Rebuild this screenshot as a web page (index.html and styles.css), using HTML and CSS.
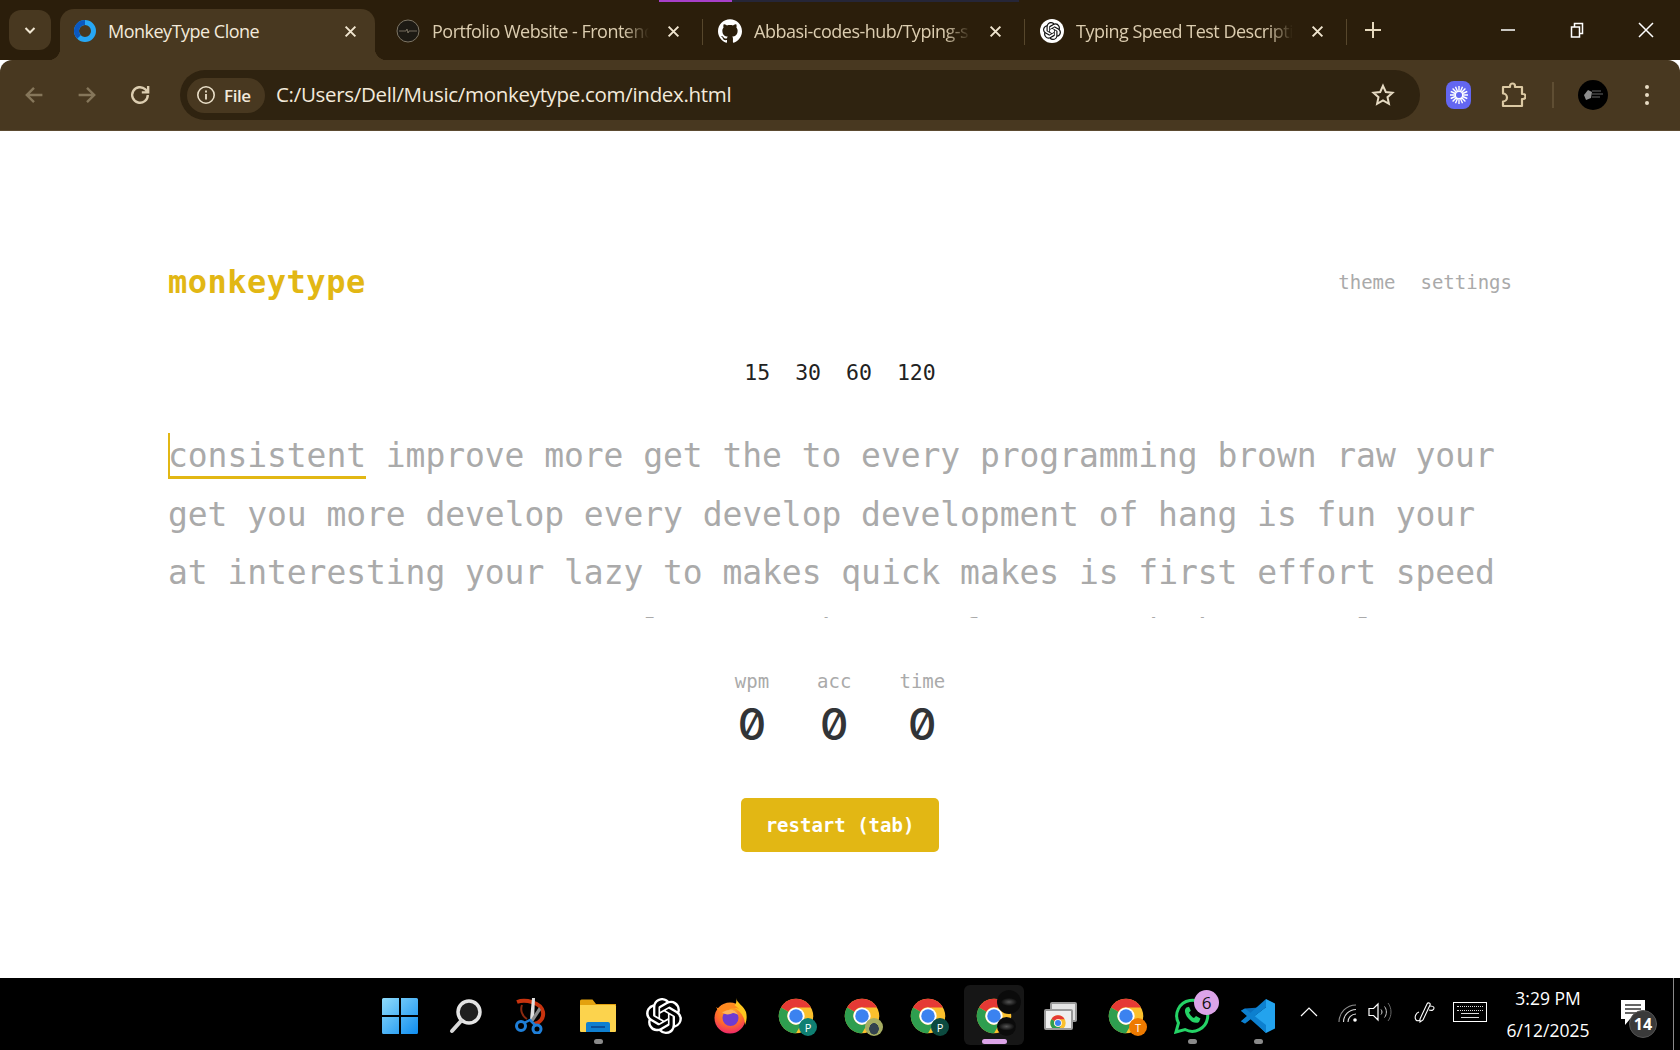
FILE: index.html
```html
<!DOCTYPE html>
<html lang="en">
<head>
  <meta charset="UTF-8">
  <meta name="viewport" content="width=device-width, initial-scale=1.0">
  <title>MonkeyType Clone</title>
  <link rel="stylesheet" href="styles.css">
</head>
<body>
  <svg class="defs" width="0" height="0">
    <defs>
      <radialGradient id="fox-body" cx="50%" cy="25%" r="85%">
        <stop offset="0" stop-color="#ffb01f"/>
        <stop offset=".55" stop-color="#ff6a2b"/>
        <stop offset="1" stop-color="#e8117f"/>
      </radialGradient>
      <linearGradient id="win-pane" x1="0" y1="0" x2="1" y2="1">
        <stop offset="0" stop-color="#8fdcfb"/>
        <stop offset="1" stop-color="#0f8df0"/>
      </linearGradient>
    </defs>
    <symbol id="chrome" viewBox="0 0 48 48">
      <circle cx="24" cy="24" r="23" fill="#fbc02d"/>
      <path d="M43.900 12.500A23 23 0 0 0 4.100 12.500L14 18.250A11.500 11.500 0 0 1 24 12.500z" fill="#e53935"/>
      <path d="M4.100 12.500A23 23 0 0 0 24 47L34 29.750A11.500 11.500 0 0 1 14 18.250z" fill="#2e9e4f"/>
      <circle cx="24" cy="24" r="11.500" fill="#fff"/>
      <circle cx="24" cy="24" r="9" fill="#3b82f0"/>
    </symbol>
    <symbol id="openai" viewBox="0 0 24 24">
      <path fill="currentColor" d="M22.2819 9.8211a5.9847 5.9847 0 0 0-.5157-4.9108 6.0462 6.0462 0 0 0-6.5098-2.9A6.0651 6.0651 0 0 0 4.9807 4.1818a5.9847 5.9847 0 0 0-3.9977 2.9 6.0462 6.0462 0 0 0 .7427 7.0966 5.98 5.98 0 0 0 .511 4.9107 6.051 6.051 0 0 0 6.5146 2.9001A5.9847 5.9847 0 0 0 13.2599 24a6.0557 6.0557 0 0 0 5.7718-4.2058 5.9894 5.9894 0 0 0 3.9977-2.9001 6.0557 6.0557 0 0 0-.7475-7.0729zm-9.022 12.6081a4.4755 4.4755 0 0 1-2.8764-1.0408l.1419-.0804 4.7783-2.7582a.7948.7948 0 0 0 .3927-.6813v-6.7369l2.02 1.1686a.071.071 0 0 1 .038.052v5.5826a4.504 4.504 0 0 1-4.4945 4.4944zm-9.6607-4.1254a4.4708 4.4708 0 0 1-.5346-3.0137l.142.0852 4.783 2.7582a.7712.7712 0 0 0 .7806 0l5.8428-3.3685v2.3324a.0804.0804 0 0 1-.0332.0615L9.74 19.9502a4.4992 4.4992 0 0 1-6.1408-1.6464zM2.3408 7.8956a4.485 4.485 0 0 1 2.3655-1.9728V11.6a.7664.7664 0 0 0 .3879.6765l5.8144 3.3543-2.0201 1.1685a.0757.0757 0 0 1-.071 0l-4.8303-2.7865A4.504 4.504 0 0 1 2.3408 7.872zm16.5963 3.8558L13.1038 8.364 15.1192 7.2a.0757.0757 0 0 1 .071 0l4.8303 2.7913a4.4944 4.4944 0 0 1-.6765 8.1042v-5.6772a.79.79 0 0 0-.407-.667zm2.0107-3.0231l-.142-.0852-4.7735-2.7818a.7759.7759 0 0 0-.7854 0L9.409 9.2297V6.8974a.0662.0662 0 0 1 .0284-.0615l4.8303-2.7866a4.4992 4.4992 0 0 1 6.6802 4.66zM8.3065 12.863l-2.02-1.1638a.0804.0804 0 0 1-.038-.0567V6.0742a4.4992 4.4992 0 0 1 7.3757-3.4537l-.142.0805L8.704 5.459a.7948.7948 0 0 0-.3927.6813zm1.0976-2.3654l2.602-1.4998 2.6069 1.4998v2.9994l-2.5974 1.4997-2.6067-1.4997Z"/>
    </symbol>
    <symbol id="close" viewBox="0 0 12 12">
      <path d="M1.500 1.500l9 9M10.500 1.500l-9 9" fill="none" stroke="currentColor" stroke-width="1.800"/>
    </symbol>
  </svg>

  <div class="tabstrip">
    <div class="sync-bar"><span class="sync-purple"></span></div>
    <button class="tab-search">
      <svg width="12" height="12" viewBox="0 0 12 12"><path d="M1.500 4l4.500 4.500L10.500 4" fill="none" stroke="#f1e7d3" stroke-width="2"/></svg>
    </button>
    <div class="tab active">
      <svg class="favicon" viewBox="0 0 24 24">
        <circle cx="12" cy="12" r="8.500" fill="none" stroke="#27a7f5" stroke-width="5"/>
        <path d="M12 3.500a8.500 8.500 0 0 0-6 14.500" fill="none" stroke="#0b58c0" stroke-width="5"/>
      </svg>
      <span class="tab-title">MonkeyType Clone</span>
      <svg class="tab-close"><use href="#close"/></svg>
    </div>
    <div class="tab">
      <svg class="favicon" viewBox="0 0 24 24">
        <circle cx="12" cy="12" r="11" fill="#1d1a14" stroke="#7d7565" stroke-width="1"/>
        <path d="M3 12h7l1-2 1 4 1-2h8" fill="none" stroke="#8a8270" stroke-width=".8"/>
      </svg>
      <span class="tab-title">Portfolio Website - Frontend</span>
      <svg class="tab-close"><use href="#close"/></svg>
    </div>
    <div class="tab">
      <svg class="favicon" viewBox="0 0 24 24"><path fill="#fff" d="M12 .297c-6.630 0-12 5.373-12 12 0 5.303 3.438 9.800 8.205 11.385.6.113.82-.258.82-.577 0-.285-.01-1.040-.015-2.040-3.338.724-4.042-1.610-4.042-1.610C4.422 18.070 3.633 17.700 3.633 17.700c-1.087-.744.084-.729.084-.729 1.205.084 1.838 1.236 1.838 1.236 1.070 1.835 2.809 1.305 3.495.998.108-.776.417-1.305.76-1.605-2.665-.3-5.466-1.332-5.466-5.930 0-1.310.465-2.380 1.235-3.220-.135-.303-.54-1.523.105-3.176 0 0 1.005-.322 3.300 1.230.96-.267 1.980-.399 3-.405 1.020.006 2.040.138 3 .405 2.280-1.552 3.285-1.230 3.285-1.230.645 1.653.24 2.873.12 3.176.765.84 1.230 1.910 1.230 3.220 0 4.610-2.805 5.625-5.475 5.920.42.36.81 1.096.81 2.220 0 1.606-.015 2.896-.015 3.286 0 .315.21.69.825.57C20.565 22.092 24 17.592 24 12.297c0-6.627-5.373-12-12-12"/></svg>
      <span class="tab-title">Abbasi-codes-hub/Typing-s</span>
      <svg class="tab-close"><use href="#close"/></svg>
    </div>
    <div class="tab">
      <div class="favicon gpt-favicon"><svg width="18" height="18"><use href="#openai"/></svg></div>
      <span class="tab-title">Typing Speed Test Descripti</span>
      <svg class="tab-close"><use href="#close"/></svg>
    </div>
    <svg class="new-tab" width="16" height="16" viewBox="0 0 16 16"><path d="M8 0v16M0 8h16" stroke="#e6d9bd" stroke-width="2"/></svg>
    <div class="window-controls">
      <svg width="16" height="16" viewBox="0 0 16 16"><path d="M1 8h14" stroke="#fff" stroke-width="1.500"/></svg>
      <svg width="16" height="16" viewBox="0 0 16 16"><path d="M2.500 5h8v10h-8zM5.500 5V1.500h8v10h-3" fill="none" stroke="#fff" stroke-width="1.500"/></svg>
      <svg width="16" height="16" viewBox="0 0 16 16"><path d="M1 1l14 14M15 1L1 15" stroke="#fff" stroke-width="1.500"/></svg>
    </div>
  </div>

  <div class="toolbar">
    <svg class="nav-icon" viewBox="0 0 20 20"><path d="M17 10H4M10 4l-6 6 6 6" fill="none" stroke="#85765a" stroke-width="2"/></svg>
    <svg class="nav-icon" viewBox="0 0 20 20"><path d="M3 10h13M10 4l6 6-6 6" fill="none" stroke="#85765a" stroke-width="2"/></svg>
    <svg class="nav-icon" viewBox="0 0 20 20"><path d="M16.500 10a6.500 6.500 0 1 1-2-4.700L16.500 7.500M16.800 2.500v5.300h-5.300" fill="none" stroke="#dccdb0" stroke-width="2"/></svg>
    <div class="omnibox">
      <div class="site-chip">
        <svg width="20" height="20" viewBox="0 0 20 20"><circle cx="10" cy="10" r="8.200" fill="none" stroke="#eadfc8" stroke-width="1.600"/><path d="M10 9v5.500M10 5.500v2" stroke="#eadfc8" stroke-width="1.800"/></svg>
        <span>File</span>
      </div>
      <span class="url">C:/Users/Dell/Music/monkeytype.com/index.html</span>
      <svg width="24" height="24" viewBox="0 0 24 24"><path d="M12 2.800l2.800 6.200 6.700.7-5 4.500 1.400 6.600-5.900-3.400-5.900 3.400 1.400-6.600-5-4.500 6.700-.7z" fill="none" stroke="#e6dac2" stroke-width="2"/></svg>
    </div>
    <div class="ext-icon">
      <svg width="20" height="20" viewBox="0 0 20 20">
        <path d="M10 1v18M1 10h18M3.600 3.600l12.800 12.800M16.400 3.600L3.600 16.400M6.500 1.700l7 16.600M13.500 1.700l-7 16.600M1.700 6.500l16.600 7M18.300 6.500l-16.600 7" stroke="#fff" stroke-width="1.400"/>
        <circle cx="10" cy="10" r="3" fill="#6366f1"/>
      </svg>
    </div>
    <svg class="puzzle" width="26" height="26" viewBox="0 0 26 26"><path d="M3 5h7V4a2.500 2.500 0 0 1 5 0v1h7v7h1a2.500 2.500 0 0 1 0 5h-1v7H3v-4.500a4 4 0 0 0 0-8z" fill="none" stroke="#dcc9a3" stroke-width="2.200" stroke-linejoin="round"/></svg>
    <span class="toolbar-sep"></span>
    <div class="avatar"><svg width="24" height="16" viewBox="0 0 24 16"><path d="M3 8l4-5 4 2-1 6-5 2z" fill="#8d8d8d"/><path d="M11 4h9M11 7h11M11 10h8" stroke="#666" stroke-width="1"/></svg></div>
    <svg class="menu-dots" width="6" height="22" viewBox="0 0 6 22"><circle cx="3" cy="3" r="2" fill="#e8dcc4"/><circle cx="3" cy="11" r="2" fill="#e8dcc4"/><circle cx="3" cy="19" r="2" fill="#e8dcc4"/></svg>
  </div>

  <main class="page">
    <div class="container">
      <header class="top">
        <div class="logo">monkeytype</div>
        <nav class="links"><a>theme</a><a>settings</a></nav>
      </header>
      <div class="modes"><button>15</button><button>30</button><button>60</button><button>120</button></div>
      <div class="words">
        <span class="word current">consistent</span> <span class="word">improve</span> <span class="word">more</span> <span class="word">get</span> <span class="word">the</span> <span class="word">to</span> <span class="word">every</span> <span class="word">programming</span> <span class="word">brown</span> <span class="word">raw</span> <span class="word">your</span>
        <span class="word">get</span> <span class="word">you</span> <span class="word">more</span> <span class="word">develop</span> <span class="word">every</span> <span class="word">develop</span> <span class="word">development</span> <span class="word">of</span> <span class="word">hang</span> <span class="word">is</span> <span class="word">fun</span> <span class="word">your</span>
        <span class="word">at</span> <span class="word">interesting</span> <span class="word">your</span> <span class="word">lazy</span> <span class="word">to</span> <span class="word">makes</span> <span class="word">quick</span> <span class="word">makes</span> <span class="word">is</span> <span class="word">first</span> <span class="word">effort</span> <span class="word">speed</span>
        <span class="word">your</span> <span class="word">more</span> <span class="word">your</span> <span class="word">more</span> <span class="word">raw</span> <span class="word">lazy</span> <span class="word">you</span> <span class="word">brown</span> <span class="word">of</span> <span class="word">more</span> <span class="word">and</span> <span class="word">the</span> <span class="word">your</span> <span class="word">lazy</span>
      </div>
      <div class="stats">
        <div class="stat"><div class="stat-label">wpm</div><div class="stat-value">0</div></div>
        <div class="stat"><div class="stat-label">acc</div><div class="stat-value">0</div></div>
        <div class="stat"><div class="stat-label">time</div><div class="stat-value">0</div></div>
      </div>
      <div class="restart-row"><button class="restart">restart (tab)</button></div>
    </div>
  </main>

  <footer class="taskbar">
    <div class="slot">
      <svg class="task-icon" viewBox="0 0 36 36"><path d="M0 1.500A1.500 1.500 0 0 1 1.500 0H17v17H0zM19 0h15.500A1.500 1.500 0 0 1 36 1.500V17H19zM0 19h17v17H1.500A1.500 1.500 0 0 1 0 34.500zM19 19h17v15.500a1.500 1.500 0 0 1-1.500 1.500H19z" fill="url(#win-pane)"/></svg>
    </div>
    <div class="slot">
      <svg class="task-icon" viewBox="0 0 36 36"><circle cx="21" cy="14" r="11" fill="#1f1f1f" stroke="#e4e4e4" stroke-width="3.500"/><path d="M13 23L4 33" stroke="#d8d8d8" stroke-width="4" stroke-linecap="round"/></svg>
    </div>
    <div class="slot">
      <svg class="task-icon" viewBox="0 0 36 36">
        <path d="M3 4c8-3 24 0 26 10 1 6-3 11-9 12" fill="none" stroke="#c8330e" stroke-width="4"/>
        <path d="M8 7c-2 5 0 11 5 14" fill="none" stroke="#8c2a10" stroke-width="2"/>
        <path d="M18 0h3l-1 22h-4z" fill="#e0e0e0"/>
        <path d="M25 9l-9 14 3 1 8-12z" fill="#8c8c8c"/>
        <circle cx="7" cy="28" r="4.500" fill="none" stroke="#1f7fd8" stroke-width="3"/>
        <circle cx="23" cy="31" r="4" fill="none" stroke="#1f7fd8" stroke-width="3"/>
        <path d="M10 25l6-3 5 5" fill="none" stroke="#1f7fd8" stroke-width="2.500"/>
      </svg>
    </div>
    <div class="slot">
      <svg class="task-icon folder" viewBox="0 0 36 36">
        <path d="M0 3a1.500 1.500 0 0 1 1.500-1.500h11L16 6h20v4H0z" fill="#e3a10f"/>
        <path d="M0 7h34.500a1.500 1.500 0 0 1 1.500 1.500V33a1 1 0 0 1-1 1H1a1 1 0 0 1-1-1z" fill="#fcd34d"/>
        <path d="M6 34v-8a2 2 0 0 1 2-2h20a2 2 0 0 1 2 2v8z" fill="#0f7fd0"/>
        <path d="M11 29h14" stroke="#0a4f9a" stroke-width="2"/>
      </svg>
      <span class="run-dot"></span>
    </div>
    <div class="slot"><svg class="task-icon gpt-task"><use href="#openai"/></svg></div>
    <div class="slot">
      <svg class="task-icon" viewBox="0 0 36 36">
        <circle cx="18" cy="20" r="15.500" fill="url(#fox-body)"/>
        <path d="M24 0c1 5 8 8 10 14 1 4 1 8-1 13 0-8-5-15-12-18 3-2 4-5 3-9z" fill="#ffc61e"/>
        <circle cx="18.500" cy="20" r="8" fill="#6f3bd0"/>
        <path d="M4 9c3 6 8 7 12 7-2-3 2-6 7-6 3 0 5 2 6 4-4-7-10-9-15-8-4 1-6 2-7 4-1 0-2 0-3-1z" fill="#ff8a1f"/>
        <path d="M10 14c3 3 7 3 11 1 2 0 4 1 5 2-1-4-6-6-9-5-3 0-5 2-7 2z" fill="#ffb45a"/>
      </svg>
    </div>
    <div class="slot"><div class="chrome-wrap"><svg class="task-icon"><use href="#chrome"/></svg><span class="profile-badge teal">P</span></div></div>
    <div class="slot"><div class="chrome-wrap"><svg class="task-icon"><use href="#chrome"/></svg><span class="profile-badge photo"></span></div></div>
    <div class="slot"><div class="chrome-wrap"><svg class="task-icon"><use href="#chrome"/></svg><span class="profile-badge dark-teal">P</span></div></div>
    <div class="slot active-slot">
      <div class="chrome-wrap"><svg class="task-icon"><use href="#chrome"/></svg><span class="blob blob-top"></span><span class="blob blob-bottom"></span></div>
      <span class="run-pill"></span>
    </div>
    <div class="slot">
      <div class="app-stack">
        <span class="stack-card back"></span>
        <span class="stack-card front"><svg width="16" height="16" class="stack-chrome"><use href="#chrome"/></svg></span>
      </div>
    </div>
    <div class="slot"><div class="chrome-wrap"><svg class="task-icon"><use href="#chrome"/></svg><span class="profile-badge orange">T</span></div></div>
    <div class="slot">
      <div class="chrome-wrap">
        <svg class="task-icon" viewBox="0 0 36 36"><path d="M2 34l2.500-9A15.500 15.500 0 1 1 11 31.500z" fill="none" stroke="#25d366" stroke-width="3"/><path d="M12.500 9.500c-2.500 2-2 6 1.500 10.500s8 6 11 4l1.500-3.500-4.500-2.500-2 2c-2.300-1-4-3-5-5.500l1.800-1.800-1.800-4z" fill="#25d366"/></svg>
        <span class="count-badge">6</span>
      </div>
      <span class="run-dot"></span>
    </div>
    <div class="slot">
      <svg class="task-icon" viewBox="0 0 36 36">
        <path d="M26 1l9 4.500v25L26 35l-15-14.500L26 9z" fill="#23a3ee"/>
        <path d="M26 9L5 25.500l-4-2.300 7-5.200-7-5.300 4-2.200z" fill="#0a6fbd"/>
        <path d="M5 25.500l-4-2.300L26 1v8z" fill="#0d80cf"/>
        <path d="M5 10.500L1 12.800 26 35v-8z" fill="#0d80cf"/>
      </svg>
      <span class="run-dot"></span>
    </div>
    <div class="tray">
      <svg class="tray-caret" width="18" height="10" viewBox="0 0 18 10"><path d="M1 9l8-8 8 8" fill="none" stroke="#fff" stroke-width="1.200"/></svg>
      <svg class="tray-wifi" width="20" height="20" viewBox="0 0 20 20"><path d="M1 20A17 17 0 0 1 18 3" fill="none" stroke="#8f8f8f" stroke-width="1.100"/><path d="M5.500 20A12.500 12.500 0 0 1 18 7.500" fill="none" stroke="#dcdcdc" stroke-width="1.100"/><path d="M10 20a8 8 0 0 1 8-8" fill="none" stroke="#dcdcdc" stroke-width="1.100"/><circle cx="17" cy="18" r="1.800" fill="#fff"/></svg>
      <svg class="tray-vol" width="24" height="22" viewBox="0 0 24 22"><path d="M1 7.500h4.500L10 3v16l-4.500-4.500H1z" fill="none" stroke="#fff" stroke-width="1.200"/><path d="M13 8.500c1.300 1.500 1.300 3.500 0 5" fill="none" stroke="#ddd" stroke-width="1"/><path d="M16.500 5.500c2.500 3 2.500 8 0 11" fill="none" stroke="#ccc" stroke-width="1"/><path d="M20 2c4 5 4 13 0 18" fill="none" stroke="#666" stroke-width="1"/></svg>
      <svg class="tray-pen" width="22" height="22" viewBox="0 0 22 22"><path d="M6 18l7-15c1-2 4-1 3 1L9 19l-3 2z" fill="none" stroke="#fff" stroke-width="1.100"/><path d="M5 11c-3 1-5 5-3 8 1 1 3 1 4 0M15 9c3 1 5 0 5-2s-2-2-4-2" fill="none" stroke="#fff" stroke-width="1.100"/></svg>
      <div class="tray-kbd"><span></span><span></span><span class="solid"></span><span class="solid"></span></div>
      <div class="clock"><div>3:29 PM</div><div>6/12/2025</div></div>
      <div class="notif">
        <svg width="24" height="26" viewBox="0 0 24 26"><path d="M0 0h24v19H9l-5 6v-6H0z" fill="#fff"/><path d="M4 5h16M4 9h16M4 13h16" stroke="#333" stroke-width="1.500"/></svg>
        <span class="notif-count">14</span>
      </div>
    </div>
    <span class="show-desktop"></span>
  </footer>
</body>
</html>
```

FILE: styles.css
```css
* {
  box-sizing: border-box;
}
body {
  margin: 0;
  height: 100vh;
  overflow: hidden;
  display: flex;
  flex-direction: column;
  background-color: #fff;
  font-family: "Open Sans", sans-serif;
}
button {
  border: none;
  font-family: inherit;
}
.defs {
  position: absolute;
}

/* browser tabs */
.tabstrip {
  position: relative;
  height: 60px;
  flex: none;
  display: flex;
  align-items: flex-end;
  background-color: #2b1e0b;
  color: #dccdb0;
}
.sync-bar {
  position: absolute;
  top: 0;
  left: 659px;
  width: 360px;
  height: 2px;
  background-color: #262638;
}
.sync-purple {
  display: block;
  width: 73px;
  height: 2px;
  background-color: #a83fc9;
}
.tab-search {
  width: 42px;
  height: 40px;
  margin: 0 9px 10px 9px;
  border-radius: 12px;
  background-color: #483820;
  display: flex;
  align-items: center;
  justify-content: center;
  padding: 0;
}
.tab {
  position: relative;
  width: 322px;
  height: 51px;
  display: flex;
  align-items: center;
  padding: 0 23px 7px 15px;
  flex: none;
  font-size: 18px;
}
.tab.active {
  width: 315px;
  margin-right: 6px;
  padding: 0 18px 7px 13px;
  background-color: #483820;
  border-radius: 14px 14px 0 0;
  color: #f3eadb;
}
.tab.active::before,
.tab.active::after {
  content: "";
  position: absolute;
  bottom: 0;
  width: 12px;
  height: 12px;
}
.tab.active::before {
  left: -12px;
  background: radial-gradient(circle at 0 0, transparent 12px, #483820 12.500px);
}
.tab.active::after {
  right: -12px;
  background: radial-gradient(circle at 100% 0, transparent 12px, #483820 12.500px);
}
.tab + .tab:not(.active)::after {
  content: "";
  position: absolute;
  right: 0;
  top: 10px;
  width: 1px;
  height: 26px;
  background-color: #57472c;
}
.favicon {
  width: 24px;
  height: 24px;
  flex: none;
  margin-right: 12px;
}
.active .favicon {
  margin-right: 11px;
}
.gpt-favicon {
  border-radius: 50%;
  background-color: #fff;
  color: #111;
  display: flex;
  align-items: center;
  justify-content: center;
}
.tab-title {
  flex: 1;
  white-space: nowrap;
  overflow: hidden;
  letter-spacing: -0.500px;
  -webkit-mask-image: linear-gradient(to right, #000 88%, transparent 100%);
  mask-image: linear-gradient(to right, #000 88%, transparent 100%);
}
.tab.active .tab-title {
  -webkit-mask-image: none;
  mask-image: none;
}
.tab-close {
  width: 13px;
  height: 13px;
  margin-left: 18px;
  flex: none;
  color: #f0e5cf;
}
.new-tab {
  margin: 0 0 22px 18px;
  flex: none;
}
.window-controls {
  margin-left: auto;
  height: 60px;
  display: flex;
  align-items: center;
  gap: 53px;
  padding: 0 26px 0 0;
}

/* browser toolbar */
.toolbar {
  height: 71px;
  flex: none;
  display: flex;
  align-items: center;
  padding: 0 23px 0 22px;
  background-color: #483820;
  border-radius: 12px 12px 0 0;
  border-bottom: 1px solid #5b4a30;
}
.nav-icon {
  width: 24px;
  height: 24px;
  margin-right: 29px;
  flex: none;
}
.omnibox {
  width: 1240px;
  height: 50px;
  margin-left: -1px;
  flex: none;
  display: flex;
  align-items: center;
  padding: 0 25px 0 7px;
  border-radius: 25px;
  background-color: #2f2310;
  color: #f3eadb;
}
.site-chip {
  width: 78px;
  height: 35px;
  display: flex;
  align-items: center;
  gap: 8px;
  padding-left: 9px;
  border-radius: 18px;
  background-color: #483820;
  font-size: 17px;
  font-weight: 600;
  letter-spacing: -0.400px;
}
.url {
  flex: 1;
  margin-left: 11px;
  padding-bottom: 2px;
  font-size: 20.500px;
  letter-spacing: -0.310px;
}
.ext-icon {
  width: 25px;
  height: 28px;
  margin-left: 26px;
  border-radius: 8px;
  background-color: #6366f1;
  display: flex;
  align-items: center;
  justify-content: center;
  flex: none;
}
.puzzle {
  margin-left: 29px;
  flex: none;
}
.toolbar-sep {
  width: 2px;
  height: 26px;
  margin-left: 26px;
  background-color: #5f4e33;
  flex: none;
}
.avatar {
  width: 30px;
  height: 30px;
  margin-left: 24px;
  border-radius: 50%;
  background-color: #000;
  display: flex;
  align-items: center;
  justify-content: center;
  flex: none;
}
.menu-dots {
  margin-left: 36px;
  flex: none;
}

/* typing page */
.page {
  flex: 1;
  min-height: 0;
  display: flex;
  justify-content: center;
  font-family: "DejaVu Sans Mono", monospace;
}
.container {
  width: 1344px;
}
.top {
  display: flex;
  justify-content: space-between;
  align-items: center;
  margin-top: 127px;
}
.logo {
  color: #e2b714;
  font-size: 32px;
  font-weight: bold;
  letter-spacing: 0.500px;
  line-height: 48px;
}
.links {
  display: flex;
  gap: 25px;
  color: #aaa;
  font-size: 19px;
}
.modes {
  display: flex;
  justify-content: center;
  gap: 25px;
  margin-top: 51px;
}
.modes button {
  padding: 0;
  background: none;
  color: #222;
  font-size: 21.500px;
  line-height: 32px;
}
.words {
  height: 191px;
  margin-top: 38px;
  overflow: hidden;
  color: #aaa;
  font-size: 33px;
  line-height: 58.500px;
  letter-spacing: -0.070px;
}
.word.current {
  padding: 3px 0 4px;
  box-shadow: inset 2px 0 0 #e2b714, inset 0 -3px 0 #e2b714;
}
.stats {
  display: flex;
  justify-content: center;
  gap: 48px;
  margin-top: 50px;
}
.stat {
  text-align: center;
}
.stat-label {
  color: #aaa;
  font-size: 19px;
  line-height: 26px;
}
.stat-value {
  color: #323437;
  font-family: Inter, sans-serif;
  font-variant-numeric: slashed-zero;
  font-weight: 500;
  font-size: 44px;
  line-height: 60px;
}
.restart-row {
  display: flex;
  justify-content: center;
  margin-top: 44px;
}
.restart {
  width: 198px;
  height: 54px;
  border-radius: 5px;
  background-color: #e2b714;
  color: #fff;
  font-size: 19px;
  font-weight: bold;
}

/* windows taskbar */
.taskbar {
  position: relative;
  height: 72px;
  flex: none;
  display: flex;
  padding-left: 367px;
  background-color: #000;
  color: #fff;
}
.slot {
  position: relative;
  width: 66px;
  display: flex;
  align-items: center;
  justify-content: center;
  padding-top: 4px;
  flex: none;
}
.task-icon {
  width: 36px;
  height: 36px;
  display: block;
}
.folder {
  width: 38px;
}
.gpt-task {
  color: #fff;
}
.run-dot {
  position: absolute;
  bottom: 6px;
  left: 29px;
  width: 9px;
  height: 5px;
  border-radius: 3px;
  background-color: #8a8a8a;
}
.active-slot::before {
  content: "";
  position: absolute;
  top: 7px;
  bottom: 5px;
  left: 3px;
  right: 3px;
  border-radius: 6px;
  background-color: #161616;
}
.run-pill {
  position: absolute;
  bottom: 6px;
  left: 21px;
  width: 25px;
  height: 5px;
  border-radius: 3px;
  background-color: #dca4e8;
}
.chrome-wrap {
  position: relative;
}
.profile-badge {
  position: absolute;
  right: -3px;
  bottom: -2px;
  width: 18px;
  height: 18px;
  border-radius: 50%;
  display: flex;
  align-items: center;
  justify-content: center;
  font-size: 11px;
  color: #fff;
}
.teal {
  background-color: #0f7f72;
}
.dark-teal {
  background-color: #0c4a3f;
}
.orange {
  background-color: #ee7a00;
}
.photo {
  background: radial-gradient(ellipse 5px 6px at 50% 60%, #33424e 0 90%, #a6ad62 100%);
}
.blob {
  position: absolute;
  right: -9px;
  top: -8px;
  width: 24px;
  height: 24px;
  border-radius: 50%;
  background: radial-gradient(ellipse 8px 4px at 50% 50%, #555 0, #0b0b0b 100%);
}
.blob-bottom {
  top: auto;
  bottom: -2px;
  right: -4px;
  width: 19px;
  height: 19px;
}
.app-stack {
  position: relative;
  width: 33px;
  height: 28px;
}
.stack-card {
  position: absolute;
  border-radius: 2px;
  border: 2px solid #9a9a9a;
}
.stack-card.back {
  top: 0;
  right: 0;
  width: 27px;
  height: 20px;
  background-color: #e4e4e4;
}
.stack-card.front {
  left: 0;
  bottom: 0;
  width: 29px;
  height: 21px;
  background-color: #efefef;
  overflow: hidden;
}
.stack-chrome {
  display: block;
  margin: 4px 0 0 4.500px;
}
.count-badge {
  position: absolute;
  top: -8px;
  right: -9px;
  width: 25px;
  height: 25px;
  border-radius: 50%;
  background-color: #dca4e8;
  color: #111;
  font-size: 17px;
  display: flex;
  align-items: center;
  justify-content: center;
}
.tray {
  display: flex;
  align-items: center;
  flex: none;
  padding-bottom: 4px;
}
.tray > svg,
.tray-kbd {
  flex: none;
}
.tray-caret {
  margin: 0 9px;
}
.tray-wifi {
  margin: 0 10px 0 11px;
}
.tray-vol {
  margin: 0 22px 0 0;
}
.tray-pen {
  margin: 0 12px 0 0;
}
.tray-kbd {
  width: 34px;
  height: 20px;
  margin: 0 5px;
  border: 1px solid #fff;
  padding: 3px;
  display: flex;
  flex-direction: column;
  justify-content: space-between;
}
.tray-kbd span {
  height: 1px;
  border-top: 1px dotted #ddd;
}
.tray-kbd .solid {
  margin: 0 4px;
  border-top-style: solid;
}
.clock {
  width: 108px;
  margin-left: 2px;
  text-align: center;
  font-size: 17.500px;
  line-height: 32px;
  padding-top: 4px;
}
.notif {
  position: relative;
  width: 62px;
  padding-left: 19px;
  margin-top: 2px;
}
.notif svg {
  display: block;
}
.notif-count {
  position: absolute;
  left: 27px;
  top: 10px;
  width: 28px;
  height: 28px;
  border-radius: 50%;
  background-color: #3a3a3a;
  border: 1px solid #555;
  font-size: 16px;
  font-weight: bold;
  display: flex;
  align-items: center;
  justify-content: center;
}
.show-desktop {
  position: absolute;
  right: 6px;
  top: 0;
  bottom: 0;
  width: 1px;
  background-color: #8a8a8a;
}
```
